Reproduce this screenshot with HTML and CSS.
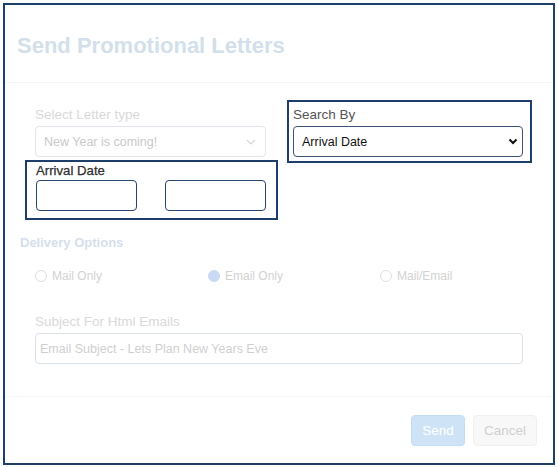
FILE: index.html
```html
<!DOCTYPE html>
<html>
<head>
<meta charset="utf-8">
<link rel="stylesheet" href="styles.css">
</head>
<body>
<div class="frame">
  <div class="header">
    <h1 class="title">Send Promotional Letters</h1>
  </div>
  <div class="body">
    <div class="top-row">
      <div class="col">
        <div class="lbl faded">Select Letter type</div>
        <div class="select select-faded">
          <span>New Year is coming!</span>
          <svg class="chev" width="10" height="6" viewBox="0 0 10 6"><path d="M1 1l4 4 4-4" fill="none" stroke="#d2d6db" stroke-width="1.2"/></svg>
        </div>
        <div class="arrival">
          <div class="lbl-dark">Arrival Date</div>
          <div class="dates">
            <div class="date-input"></div>
            <div class="date-input"></div>
          </div>
        </div>
      </div>
      <div class="col">
        <div class="search">
          <div class="lbl mid">Search By</div>
          <div class="select select-dark">
            <span>Arrival Date</span>
            <svg class="chev" width="10" height="7" viewBox="0 0 10 7"><path d="M1.5 1.5l3.5 3.5 3.5-3.5" fill="none" stroke="#111" stroke-width="2"/></svg>
          </div>
        </div>
      </div>
    </div>
    <div class="section-title">Delivery Options</div>
    <div class="radios">
      <div class="radio"><span class="dot"></span><span>Mail Only</span></div>
      <div class="radio"><span class="dot on"></span><span>Email Only</span></div>
      <div class="radio"><span class="dot"></span><span>Mail/Email</span></div>
    </div>
    <div class="lbl faded subject-lbl">Subject For Html Emails</div>
    <div class="text-input">Email Subject - Lets Plan New Years Eve</div>
  </div>
  <div class="footer">
    <div class="btn btn-send">Send</div>
    <div class="btn btn-cancel">Cancel</div>
  </div>
</div>
</body>
</html>
```

FILE: styles.css
```css
* { box-sizing: border-box; }
html, body { margin: 0; padding: 0; background: #fff; }
body { font-family: "Liberation Sans", Arial, Helvetica, sans-serif; }

.frame {
  margin: 3px 0 0 3px;
  width: 552px;
  height: 462px;
  border: 2px solid #1d3e6a;
  background: #fff;
}

.header {
  height: 78px;
  padding: 28px 12px 0;
  border-bottom: 1px solid #f5f5f5;
}
.title {
  margin: 0;
  font-size: 22px;
  line-height: 26px;
  font-weight: bold;
  color: #d3dfeb;
}

.body {
  padding: 24px 30px 32px 30px;
}

.top-row {
  display: grid;
  grid-template-columns: 231px 230px;
  column-gap: 27px;
  align-items: start;
}

.lbl {
  font-size: 13.5px;
  line-height: 16px;
}
.faded { color: #d9d9d9; }
.mid { color: #555; }

.select {
  margin-top: 3px;
  height: 31px;
  border-radius: 4px;
  display: flex;
  align-items: center;
  justify-content: space-between;
  font-size: 12.5px;
}
.select-faded {
  border: 1px solid #e1e6ec;
  padding: 0 9px 0 8px;
  color: #c9c9c9;
}
.select-dark {
  border: 1px solid #3c5475;
  padding: 0 4px 0 8px;
  color: #111;
}

.arrival {
  margin: 3px -12px 0 -10px;
  border: 2px solid #1d3e6a;
  padding: 1px 10px 7px 9px;
}
.lbl-dark {
  font-size: 13.2px;
  line-height: 15px;
  font-weight: normal;
  color: #2e2e2e;
  -webkit-text-stroke: 0.25px #2e2e2e;
}
.dates {
  margin-top: 2px;
  display: flex;
  justify-content: space-between;
}
.date-input {
  width: 101px;
  height: 31px;
  border: 1px solid #27466f;
  border-radius: 4px;
}

.search {
  margin: -7px -9px 0 -6px;
  border: 2px solid #1d3e6a;
  padding: 5px 7px 4px 4px;
}

.section-title {
  margin: 15px 0 0 -15px;
  font-size: 13px;
  line-height: 16px;
  font-weight: bold;
  color: #d5dfec;
}

.radios {
  margin-top: 17px;
  display: grid;
  grid-template-columns: 173px 172px 1fr;
}
.radio {
  display: flex;
  align-items: center;
  height: 16px;
  font-size: 12px;
  color: #d2d2d2;
}
.dot {
  width: 12px;
  height: 12px;
  border-radius: 50%;
  border: 1px solid #dedede;
  margin-right: 5px;
  flex: none;
}
.dot.on {
  border-color: #c8daf3;
  background: #c8daf3;
}

.subject-lbl { margin-top: 30px; }
.text-input {
  margin-top: 3px;
  height: 31px;
  border: 1px solid #d9e1eb;
  border-radius: 4px;
  padding: 0 4px;
  display: flex;
  align-items: center;
  font-size: 12.5px;
  color: #cfcfcf;
}

.footer {
  border-top: 1px solid #f5f5f5;
  padding: 18px 16px 0 0;
  display: flex;
  justify-content: flex-end;
  gap: 8px;
}
.btn {
  height: 31px;
  border-radius: 4px;
  display: flex;
  align-items: center;
  justify-content: center;
  font-size: 13.5px;
}
.btn-send {
  width: 54px;
  background: #cfe3f7;
  border: 1px solid #c4dcf4;
  color: #fff;
}
.btn-cancel {
  width: 64px;
  background: #f8f8f8;
  border: 1px solid #f0f0f0;
  color: #cfcfcf;
}
```
